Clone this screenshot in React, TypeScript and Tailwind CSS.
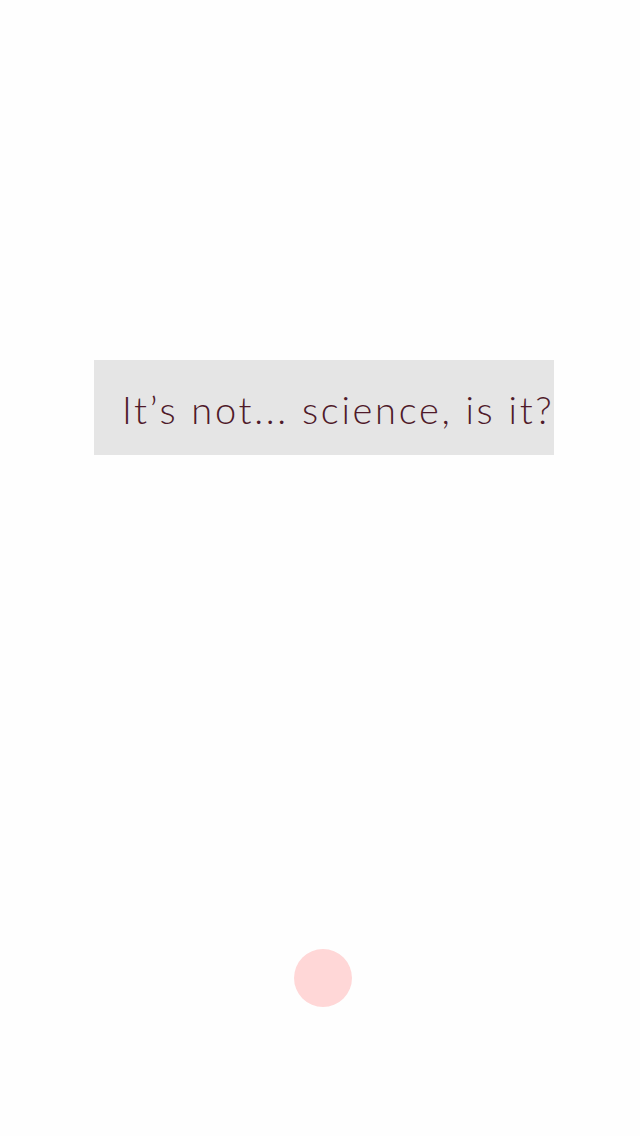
const App = () => {
  return (
    <div className="flex flex-col items-center w-full h-[1136px] bg-[#fefefe]">
      <div className="h-[360px]" />
      <div className="flex items-center w-[460px] h-[95px] bg-[#e5e5e5] ml-[8px] pl-[28px] pt-[4px] overflow-hidden">
        <span
          className="whitespace-nowrap text-[38px] font-light tracking-[2.7px] text-[#4f1a2a]"
          style={{ fontFamily: 'Lato, "Open Sans", sans-serif' }}
        >
          It’s not... science, is it?
        </span>
      </div>
      <div className="h-[494px]" />
      <div className="w-[58px] h-[58px] rounded-full bg-[#ffd7d7] ml-[6px]" />
    </div>
  );
};

export default App;
